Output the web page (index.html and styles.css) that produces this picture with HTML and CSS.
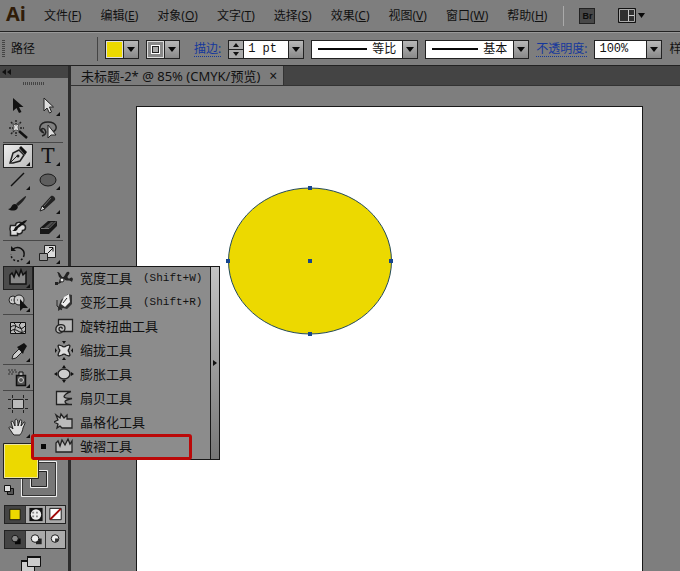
FILE: index.html
```html
<!DOCTYPE html>
<html lang="zh-CN">
<head>
<meta charset="utf-8">
<title>未标题-2</title>
<link rel="stylesheet" href="styles.css">
</head>
<body>
<header class="menubar">
  <span class="logo">Ai</span>
  <nav class="menus">
    <button>文件(<u>F</u>)</button><button>编辑(<u>E</u>)</button><button>对象(<u>O</u>)</button><button>文字(<u>T</u>)</button><button>选择(<u>S</u>)</button><button>效果(<u>C</u>)</button><button>视图(<u>V</u>)</button><button>窗口(<u>W</u>)</button><button>帮助(<u>H</u>)</button>
  </nav>
  <span class="menu-rule"></span>
  <button class="bridge" aria-label="Bridge">Br</button>
  <button class="arrange" aria-label="排列文档"><svg width="28" height="16" viewBox="0 0 28 16"><path d="M.5 .5h17v14H.5z" fill="#303030" stroke="#111"/><path d="M1.500 1.500h15v12h-15z" fill="none" stroke="#aaa"/><path d="M10.500 2v11M11 7.500h5" stroke="#ccc"/><path d="M20 5h7l-3.500 5z" fill="#080808"/></svg></button>
</header>

<section class="control-bar">
  <span class="grip"></span>
  <span class="object-kind">路径</span>
  <div class="swatch-pick"><button class="chip fill-chip" aria-label="填色"></button><button class="arrow" aria-label="填色选项"></button></div>
  <div class="swatch-pick"><button class="chip stroke-chip" aria-label="描边颜色"><i></i></button><button class="arrow" aria-label="描边选项"></button></div>
  <div class="field-group">
    <a class="panel-link" href="#stroke">描边:</a>
    <div class="combo weight">
      <span class="stepper"><button class="up" aria-label="增加"></button><button class="down" aria-label="减少"></button></span>
      <input type="text" value="1 pt" aria-label="描边粗细"><button class="arrow" aria-label="粗细预设"></button>
    </div>
  </div>
  <div class="combo profile"><span class="stroke-line"></span><select aria-label="变量宽度"><option>等比</option></select><span class="arrow"></span></div>
  <div class="combo brush"><span class="stroke-line"></span><select aria-label="画笔定义"><option>基本</option></select><span class="arrow"></span></div>
  <div class="field-group">
    <a class="panel-link" href="#opacity">不透明度:</a>
    <div class="combo opacity"><input type="text" value="100%" aria-label="不透明度值"><button class="arrow" aria-label="不透明度预设"></button></div>
  </div>
  <span class="style-label">样</span>
</section>

<main class="workspace">
  <aside class="toolbox">
    <button class="collapse" aria-label="折叠"><svg width="9" height="6" viewBox="0 0 9 6"><path d="M4 0v6L0 3zM9 0v6L5 3z" fill="#111"/></svg></button>
    <div class="drag"><span></span></div>
    <div class="tools">
      <div class="group">
        <button aria-label="选择"><svg viewBox="0 0 30 24"><path d="M10 4v13l3.500-3 2.500 5 2.500-1-2.500-5h4.500z" fill="#111"/></svg></button>
        <button class="more" aria-label="直接选择"><svg viewBox="0 0 30 24"><path d="M11 4v13l3-3 2.500 5 2-1-2-5h4z" fill="#ddd" stroke="#222"/></svg></button>
        <button aria-label="魔棒"><svg viewBox="0 0 30 24"><path d="M16 13l8 7" stroke="#111" stroke-width="2.500"/><path d="M13 2v4M13 14v4M6 10h4M17 10h4M8 4l3 3M18 4l-3 3M8 16l3-3" stroke="#222" stroke-width="1.500" stroke-dasharray="2 1"/><path d="M10 6l3 1 3-1-1 3 1 4-3-1-3 1 1-4z" fill="#ddd" stroke="#555"/></svg></button>
        <button aria-label="套索"><svg viewBox="0 0 30 24"><path d="M11 15C4 13 6 4 15 4s11 8 4 10M11 15c-5-4-1-6 1-3s0 5-3 6" fill="none" stroke="#222" stroke-width="1.500"/><path d="M15 7v13l3-3h5z" fill="#ddd" stroke="#222"/></svg></button>
      </div>
      <div class="group">
        <button class="more active" aria-label="钢笔"><svg viewBox="0 0 30 24"><path d="M7 19l3-10 6-3 5 5-4 6-7 2z" fill="#ccc" stroke="#222" stroke-width="1.500"/><path d="M8 18l6-6" stroke="#222"/><circle cx="15" cy="12" r="1.500" fill="#222"/><path d="M16 4l2-2 6 6-2 3z" fill="#111"/></svg></button>
        <button class="more type-tool" aria-label="文字">T</button>
        <button class="more" aria-label="直线段"><svg viewBox="0 0 30 24"><path d="M8 18L21 5" stroke="#111" stroke-width="1.500"/></svg></button>
        <button class="more" aria-label="椭圆"><svg viewBox="0 0 30 24"><ellipse cx="15" cy="12" rx="8" ry="6" fill="#5e5e5e" stroke="#181818"/></svg></button>
        <button aria-label="画笔"><svg viewBox="0 0 30 24"><path d="M23 4c1 1-5 8-8 10l-2-2C16 9 22 4 23 4z" fill="#222"/><path d="M12 12c2 0 4 3 2 5-2 2-6 2-9 0 4 0 3-5 7-5z" fill="#111"/></svg></button>
        <button class="more" aria-label="铅笔"><svg viewBox="0 0 30 24"><path d="M7 19l2-5L18 4c2-1 5 2 4 4L12 17z" fill="#222"/><path d="M7 19l2-5 3 3z" fill="#ddd" stroke="#222"/><path d="M11 14l7-8" stroke="#666"/></svg></button>
        <button aria-label="斑点画笔"><svg viewBox="0 0 30 24"><path d="M7.500 9.500h5c0-4 6-4 7-1 4 0 4 6 0 6 0 3-3 4-5 3v2h-7v-4c-1-2-1-3 0-6z" fill="#ddd" stroke="#222" stroke-width="1.500"/><path d="M24 4c0 2-6 6-9 8-1 4-4 3-6 3 3-1 2-4 5-5 3-3 8-6 10-6z" fill="#111"/></svg></button>
        <button class="more" aria-label="橡皮擦"><svg viewBox="0 0 30 24"><path d="M7 12l8-7h9v5l-8 8H7z" fill="#181818"/><path d="M8 12.500h8l7-7" fill="none" stroke="#777"/><path d="M11 12l7-6h3l-6 6z" fill="#4c4c4c"/></svg></button>
      </div>
      <div class="group">
        <button class="more" aria-label="旋转"><svg viewBox="0 0 30 24"><path d="M10 7c6-4 12 1 11 6" fill="none" stroke="#111" stroke-width="1.500"/><path d="M21 13c-1 8-13 8-13-1" fill="none" stroke="#111" stroke-width="1.500" stroke-dasharray="2 2"/><path d="M8 4v5h5z" fill="#111"/></svg></button>
        <button class="more" aria-label="比例缩放"><svg viewBox="0 0 30 24"><path d="M11.500 3.500h11v12h-11z" fill="#ddd" stroke="#222"/><path d="M6.500 11.500h8v7h-8z" fill="#999" stroke="#222"/><path d="M15 11l5-5M16 5.500h4v4" fill="none" stroke="#111"/></svg></button>
        <button class="more current" aria-label="皱褶"><svg viewBox="0 0 30 24"><path d="M7 18V9l2-2 2 4 2-6 3 5 2-6 2 5 3-3v12z" fill="#888" stroke="#111" stroke-width="1.500"/></svg></button>
        <span></span>
        <button class="more" aria-label="形状生成器"><svg viewBox="0 0 30 24"><circle cx="10" cy="10" r="4" fill="#ccc" stroke="#222"/><circle cx="16" cy="10" r="5" fill="#ccc" stroke="#222"/><path d="M8 10h8" stroke="#333" stroke-dasharray="1 2"/><path d="M17 9v12l3-3h5z" fill="#111"/></svg></button>
        <span></span>
      </div>
      <div class="group">
        <button aria-label="网格"><svg viewBox="0 0 30 24"><path d="M7.500 6.500h15v11h-15z" fill="#bbb" stroke="#111"/><path d="M8 11c5-5 9 6 14-1M8 15c5-5 9 5 14 0M11 7c5 4-3 7 2 10M18 7c-5 3 4 7 0 10" fill="none" stroke="#111"/></svg></button>
        <span></span>
        <button class="more" aria-label="吸管"><svg viewBox="0 0 30 24"><path d="M9 19l1-4 6-6 3 3-6 6z" fill="#ccc" stroke="#222"/><path d="M14 7l2-1 5-3 3 3-3 5-1 3z" fill="#111"/></svg></button>
        <span></span>
      </div>
      <div class="group">
        <button class="more" aria-label="符号喷枪"><svg viewBox="0 0 30 24"><path d="M13.500 9.500h9v10h-9z" fill="#555" stroke="#111" stroke-width="1.500"/><path d="M16 9V6h4v3" fill="#aaa" stroke="#111"/><circle cx="18" cy="14" r="2.500" fill="#555" stroke="#ccc"/><path d="M5 4h9M6 6h8M5 8h5" stroke="#333" stroke-dasharray="2 1"/></svg></button>
        <span></span>
      </div>
      <div class="group">
        <button aria-label="画板"><svg viewBox="0 0 30 24"><path d="M9 7h12v10H9z" fill="#bbb"/><path d="M9.500 7.500h11v9h-11zM5 7.500h3M22 7.500h3M5 16.500h3M22 16.500h3M9.500 3v3M20.500 3v3M9.500 18v3M20.500 18v3" fill="none" stroke="#222"/></svg></button>
        <span></span>
        <button class="more" aria-label="抓手"><svg viewBox="0 0 30 24"><path d="M10 18l-4-6c0-2 2-1 4 1L8 6c1-2 2-1 4 4l0-6c2-2 3 0 3 6l2-6c2-1 2 1 1 6l3-4c2 0 1 1-1 6-1 5-2 5-3 7h-6z" fill="#ddd" stroke="#222"/></svg></button>
        <span></span>
      </div>
    </div>
    <div class="paint">
      <svg width="58" height="60" viewBox="0 0 58 60"><path d="M18.500 21.500h35v35h-35z" fill="#777" stroke="#eee"/><path d="M19.500 22.500h33v33h-33z" fill="none" stroke="#333"/><path d="M27.500 30.500h17v17h-17z" fill="#777" stroke="#eee"/><path d="M28.500 31.500h15v15h-15z" fill="#777" stroke="#222"/><path d="M.5 3.500h35v35H.5z" fill="#ecd900" stroke="#222"/><path d="M1.500 4.500h33v33h-33z" fill="none" stroke="#eee8a0"/><path d="M4.500 48.500h6v6h-6z" fill="#555" stroke="#111"/><path d="M1.500 45.500h6v6h-6z" fill="#ddd" stroke="#111"/></svg>
    </div>
    <div class="strip">
      <button class="on" aria-label="颜色"><svg viewBox="0 0 20 18"><path d="M4.500 3.500h11v11h-11z" fill="#ecd900" stroke="#111"/></svg></button>
      <button aria-label="渐变"><svg viewBox="0 0 20 18"><path d="M3 2h14v14H3z" fill="#111"/><circle cx="10" cy="9" r="5.500" fill="#eee"/><path d="M6 7h8M6 11h8" stroke="#888" stroke-width="2" stroke-dasharray="2 2"/></svg></button>
      <button aria-label="无"><svg viewBox="0 0 20 18"><path d="M3.500 2.500h12v12h-12z" fill="#fff" stroke="#111"/><path d="M4 14L15 3" stroke="#a00808" stroke-width="2"/></svg></button>
    </div>
    <div class="strip">
      <button class="on" aria-label="正常绘图"><svg viewBox="0 0 20 18"><path d="M10 8h6v6h-6z" fill="#080808"/><circle cx="10" cy="8" r="3.500" fill="#888" stroke="#111"/></svg></button>
      <button aria-label="背面绘图"><svg viewBox="0 0 20 18"><path d="M10 8h6v6h-6z" fill="#222"/><circle cx="9" cy="8" r="4" fill="#eee" stroke="#111"/></svg></button>
      <button aria-label="内部绘图"><svg viewBox="0 0 20 18"><circle cx="9" cy="8" r="4" fill="#eee" stroke="#111"/><path d="M9 8h4a4 4 0 0 1-4 4z" fill="#333"/></svg></button>
    </div>
    <button class="screen-mode" aria-label="屏幕模式"><svg width="24" height="18" viewBox="0 0 24 18"><path d="M2.500 5.500h13v11h-13z" fill="#ccc" stroke="#111"/><path d="M2 6h14" stroke="#111" stroke-width="2"/><path d="M8.500 1.500h13v10h-13z" fill="#ccc" stroke="#111"/><path d="M8 2h14" stroke="#111" stroke-width="2"/></svg></button>

    <div class="flyout">
      <ul>
        <li><button><svg viewBox="0 0 20 20"><path d="M3 4c3-1 4 5 6 5s3-7 6-5c2 2-3 4-1 6s3-3 5 1l-1 3c-2-3-6 0-8-3-2 2-3 5-7 5 3-2 2-4 4-6-3 0-2-4-4-6z" fill="#222"/><circle cx="8" cy="12" r="2" fill="#eee" stroke="#222"/><path d="M1 14h3v3H1z" fill="#222"/></svg>宽度工具<kbd>(Shift+W)</kbd></button></li>
        <li><button><svg viewBox="0 0 20 20"><path d="M4 16l3-8 7-6 4 1v9l-5 5-4-1-5 3z" fill="#333"/><path d="M7 12l3-7 5-3 1 8-5 5z" fill="#eee"/><path d="M3 8v6l5 4M9 11l4-5" fill="none" stroke="#222"/></svg>变形工具<kbd>(Shift+R)</kbd></button></li>
        <li><button><svg viewBox="0 0 20 20"><path d="M4.500 9V3.500h14v12H9C5 19 1 16 2 12s9-5 9 0-6 4-6 1 4-2 3 0" fill="#bbb" stroke="#222" stroke-width="1.300"/></svg>旋转扭曲工具</button></li>
        <li><button><svg viewBox="0 0 20 20"><path d="M5 5l3 1c1 1 3 1 4 0l3-1 1 1-1 3c-1 1-1 2 0 3l1 3-1 1-3-1c-1-1-3-1-4 0l-3 1-1-1 1-3c1-1 1-2 0-3L4 6z" fill="#ddd" stroke="#222" stroke-width="1.300"/><path d="M8 1h4l-2 3zM8 20h4l-2-3zM1 8v5l2-2.500zM19 8v5l-2-2.500z" fill="#111"/></svg>缩拢工具</button></li>
        <li><button><svg viewBox="0 0 20 20"><ellipse cx="10" cy="10" rx="6" ry="5" fill="#ccc" stroke="#222" stroke-width="1.500"/><path d="M8 4h4l-2-3zM8 16h4l-2 3zM3 8v4l-3-2zM17 8v4l3-2z" fill="#111"/></svg>膨胀工具</button></li>
        <li><button><svg viewBox="0 0 20 20"><path d="M17 3.500H2.500v13H18c-4 0-7-1-7-3 0-1 3-2 7-3-5 0-8-1-8-2s3-4 7-5" fill="#bbb" stroke="#222" stroke-width="1.300"/></svg>扇贝工具</button></li>
        <li><button><svg viewBox="0 0 20 20"><path d="M6 14l-3 2 1-4-4-2 4-2-2-5 4 3 1-4 3 4 3-3v4h5v9H8z" fill="#bbb" stroke="#222" stroke-width="1.300"/></svg>晶格化工具</button></li>
        <li class="chosen"><button><svg viewBox="0 0 20 20"><path d="M2 16V7l2-2 2 5 2-6 3 5 3-6 2 5 2-3v11z" fill="#bbb" stroke="#222" stroke-width="1.300"/></svg>皱褶工具</button></li>
      </ul>
      <button class="tear-off" aria-label="拖出"><svg width="5" height="6" viewBox="0 0 5 6"><path d="M0 0l4 3-4 3z" fill="#111"/></svg></button>
      <span class="callout"></span>
    </div>
  </aside>

  <section class="document">
    <div class="tabs"><div class="tab"><span>未标题-2* @ 85% (CMYK/预览)</span><button aria-label="关闭">×</button></div></div>
    <div class="canvas">
      <div class="artboard">
        <svg class="shape" width="170" height="152" viewBox="0 0 170 152"><ellipse cx="85" cy="76" rx="81.500" ry="73" fill="#ecd900" stroke="#234a5c"/><path d="M83 1h4v4h-4zM83 147h4v4h-4zM1 74h4v4h-4zM164 74h4v4h-4zM83 74h4v4h-4z" fill="#17468c"/></svg>
      </div>
    </div>
  </section>
</main>
</body>
</html>
```
FILE: styles.css
```css
* { box-sizing: border-box; }
body {
  margin: 0;
  height: 100vh;
  display: flex;
  flex-direction: column;
  overflow: hidden;
  background: #7e7e7e;
  color: #111;
  font: 12px/16px "Noto Sans", "Noto Sans CJK SC", sans-serif;
}
button, input, select { font: inherit; color: inherit; margin: 0; padding: 0; border: 0; background: none; border-radius: 0; }
svg { display: block; }

.menubar { display: flex; align-items: center; height: 32px; flex: none; border-bottom: 1px solid #222; white-space: nowrap; }
.logo { width: 44px; padding: 0 0 4px 6px; font: bold 20px/24px "Open Sans", sans-serif; color: #301c08; }
.menus { display: flex; gap: 19px; }
.menu-rule { width: 1px; height: 20px; margin: 0 15px 0 16px; background: #aaa; }
.bridge { width: 16px; height: 16px; margin-right: 23px; border: 1px solid #222; background: #484848; color: #0c0c0c; font: bold 9px/12px "Liberation Sans", sans-serif; }

.control-bar { display: flex; align-items: center; height: 34px; flex: none; border-top: 1px solid #999; border-bottom: 1px solid #222; white-space: nowrap; overflow: hidden; }
.control-bar > * { flex: none; }
.grip { width: 3px; height: 18px; margin: 0 6px 0 2px; background: repeating-linear-gradient(#444 0 1px, transparent 1px 2px); }
.object-kind { width: 87px; height: 24px; line-height: 24px; margin-right: 7px; border-right: 1px solid #444; }
.swatch-pick { display: flex; height: 19px; margin-right: 7px; border: 1px solid #222; }
.chip { width: 17px; border: 1px solid #ddd; }
.fill-chip { background: #ecd900; }
.stroke-chip { display: grid; place-items: center; background: #888; }
.stroke-chip i { width: 7px; height: 7px; border: 1px solid #222; background: #aaa; outline: 1px solid #fff; }
.arrow { display: grid; place-items: center; flex: none; width: 15px; border-left: 1px solid #222; background: linear-gradient(#b8b8b8, #888); pointer-events: none; }
.arrow::after { content: ""; border: 4px solid transparent; border-top: 5px solid #080808; border-bottom: 0; }
.field-group { display: flex; align-items: center; gap: 7px; margin: 0 7px; }
.panel-link { color: #14379c; text-decoration: none; border-bottom: 1px dotted #14379c; line-height: 15px; }
.combo { display: flex; height: 19px; border: 1px solid #222; background: #fff; }
.combo input { flex: 1; min-width: 0; padding-left: 4px; font: 12px/16px "Liberation Mono", monospace; }
.combo select { appearance: none; width: 30px; outline: 0; }
.weight { width: 76px; }
.profile { width: 107px; margin-right: 7px; }
.brush { width: 104px; }
.opacity { width: 68px; }
.stepper { display: flex; flex-direction: column; width: 15px; border-right: 1px solid #222; background: #aaa; }
.stepper button { display: grid; place-items: center; flex: 1; }
.stepper button + button { border-top: 1px solid #222; }
.stepper button::after { content: ""; border: 3px solid transparent; }
.stepper .up::after { border-bottom: 4px solid #111; border-top: 0; }
.stepper .down::after { border-top: 4px solid #111; border-bottom: 0; }
.stroke-line { flex: 1; align-self: center; height: 2px; margin: 0 5px 0 6px; background: #080808; }

.workspace { flex: 1; min-height: 0; display: flex; }
.toolbox { position: relative; display: flex; flex-direction: column; flex: none; width: 71px; border-right: 3px solid #2c2c2c; background: #808080; }
.toolbox > * { flex: none; }
.collapse { height: 12px; padding-left: 2px; background: #444; }
.drag { height: 16px; padding: 4px 23px; }
.drag span { display: block; height: 3px; background: repeating-linear-gradient(90deg, #444 0 1px, transparent 1px 2px); }
.tools { width: 63px; padding-left: 3px; }
.group { display: grid; grid-template-columns: 30px 30px; grid-auto-rows: 24px; }
.group + .group { border-top: 1px solid #484848; padding-top: 1px; }
.group button { position: relative; width: 30px; height: 24px; }
.group svg { width: 30px; height: 24px; }
.more::after { content: ""; position: absolute; right: 3px; bottom: 2px; border: 2px solid #111; border-left-color: transparent; border-top-color: transparent; }
.active { background: linear-gradient(135deg, #eee, #bbb); box-shadow: inset 0 0 0 1px #222; }
.current { background: #4c4c4c; box-shadow: inset 0 0 0 1px #222; }
.group .type-tool { font: 20px/22px "DejaVu Serif", serif; }
.paint { padding: 0 0 5px 3px; }
.strip { display: grid; grid-template-columns: repeat(3, 20px); width: 62px; height: 19px; margin: 0 0 6px 4px; border: 1px solid #222; background: #aaa; }
.strip button + button { border-left: 1px solid #333; }
.strip .on { background: #444; }
.strip svg { width: 20px; height: 17px; }
.screen-mode { padding-left: 19px; }

.flyout { position: absolute; z-index: 2; left: 33px; top: 200px; display: flex; border: 1px solid #181818; background: #8c8c8c; }
.flyout ul { width: 176px; margin: 0; padding: 0; list-style: none; }
.flyout li { position: relative; }
.flyout li button { display: flex; align-items: center; gap: 6px; width: 100%; height: 24px; padding: 0 0 3px 20px; font-size: 13px; white-space: nowrap; }
.flyout li svg { width: 20px; height: 20px; flex: none; }
.flyout kbd { margin-left: 5px; font: 11px/16px "Liberation Mono", monospace; }
.chosen::before { content: ""; position: absolute; left: 7px; top: 9px; width: 5px; height: 5px; background: #080808; }
.tear-off { width: 9px; padding-left: 2px; border-left: 1px solid #181818; background: linear-gradient(#c4c4c4, #777); }
.callout { position: absolute; left: -3px; bottom: -1px; width: 161px; height: 26px; border: 3px solid #bb0808; border-radius: 3px; pointer-events: none; }

.document { flex: 1; min-width: 0; display: flex; flex-direction: column; }
.tabs { display: flex; flex: none; height: 20px; background: #444; border-bottom: 1px solid #333; }
.tab { display: flex; align-items: center; gap: 8px; padding: 0 5px 0 10px; background: #7c7c7c; border-right: 1px solid #333; font-size: 13px; white-space: nowrap; }
.tab button { width: 10px; font-size: 14px; }
.canvas { flex: 1; min-height: 0; display: flex; padding: 20px 37px 0 65px; }
.artboard { flex: 1; min-width: 0; border: 1px solid #181818; border-bottom: 0; background: #fff; }
.shape { margin: 78px 0 0 88px; }
```
